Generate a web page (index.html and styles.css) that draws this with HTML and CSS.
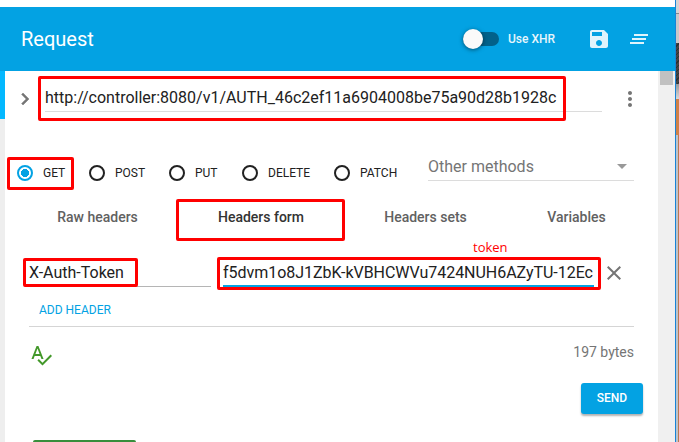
FILE: index.html
```html
<!DOCTYPE html>
<html lang="en">
<head>
<meta charset="utf-8">
<title>Request</title>
<link rel="stylesheet" href="styles.css">
</head>
<body>
<div class="screen">
  <div class="window">
    <header class="toolbar">
      <h1 class="title">Request</h1>
      <div class="toggle"><span class="knob"></span></div>
      <span class="toggle-label">Use XHR</span>
      <svg class="icon save" viewBox="0 0 24 24"><path d="M17 3H5c-1.11 0-2 .9-2 2v14c0 1.1.89 2 2 2h14c1.1 0 2-.9 2-2V7l-4-4zm-5 16c-1.66 0-3-1.34-3-3s1.34-3 3-3 3 1.34 3 3-1.34 3-3 3zm3-10H5V5h10v4z"/></svg>
      <svg class="icon clear" viewBox="0 0 24 24"><path d="M5 13h14v-2H5v2zm-2 4h14v-2H3v2zM7 7v2h14V7H7z"/></svg>
    </header>
    <div class="body">
      <div class="rail"></div>
      <main class="panel">
        <div class="url-row">
          <svg class="icon chevron" viewBox="0 0 24 24"><path d="M10 6L8.59 7.41 13.17 12l-4.58 4.59L10 18l6-6z"/></svg>
          <div class="url-field"><span class="t-url">http://controller:8080/v1/AUTH_46c2ef11a6904008be75a90d28b1928c</span><i class="mark mark-url"></i></div>
          <svg class="icon more" viewBox="0 0 24 24"><path d="M12 8c1.100 0 2-.9 2-2s-.9-2-2-2-2 .9-2 2 .9 2 2 2zm0 2c-1.100 0-2 .9-2 2s.9 2 2 2 2-.9 2-2-.9-2-2-2zm0 6c-1.100 0-2 .9-2 2s.9 2 2 2 2-.9 2-2-.9-2-2-2z"/></svg>
        </div>
        <div class="method-row">
          <div class="method get"><span class="radio on"></span><span>GET</span><i class="mark mark-get"></i></div>
          <div class="method post"><span class="radio"></span><span>POST</span></div>
          <div class="method put"><span class="radio"></span><span>PUT</span></div>
          <div class="method delete"><span class="radio"></span><span>DELETE</span></div>
          <div class="method patch"><span class="radio"></span><span>PATCH</span></div>
          <div class="select"><span class="t-other">Other methods</span><span class="caret"></span></div>
        </div>
        <nav class="tabs">
          <div class="tab"><span>Raw headers</span></div>
          <div class="tab active"><span>Headers form</span><i class="mark mark-tab"></i></div>
          <div class="tab"><span>Headers sets</span></div>
          <div class="tab"><span>Variables</span></div>
        </nav>
        <div class="header-row">
          <div class="name-field"><span class="t-name">X-Auth-Token</span><i class="mark mark-name"></i></div>
          <div class="value-field"><span class="t-value">f5dvm1o8J1ZbK-kVBHCWVu7424NUH6AZyTU-12Ec</span><i class="mark mark-value"></i><span class="note">token</span></div>
          <svg class="icon remove" viewBox="0 0 24 24"><path d="M19 6.410L17.590 5 12 10.590 6.410 5 5 6.410 10.590 12 5 17.590 6.410 19 12 13.410 17.590 19 19 17.590 13.410 12z"/></svg>
        </div>
        <div class="add-row"><span>ADD HEADER</span></div>
        <div class="info-row">
          <svg class="icon spell" viewBox="0 0 24 24"><path d="M12.450 16h2.090L9.430 3H7.570L2.460 16h2.090l1.120-3h5.640l1.140 3zm-6.020-5L8.500 5.480 10.570 11H6.430zm15.160.59l-8.090 8.090L9.830 16l-1.410 1.410 5.090 5.090L23 13l-1.410-1.410z"/></svg>
          <span class="bytes">197 bytes</span>
        </div>
        <div class="send-row"><button class="send">SEND</button></div>
        <div class="status"></div>
      </main>
      <div class="scrollbar"><div class="thumb"></div></div>
    </div>
  </div>
  <div class="desktop"><div class="d1"></div><div class="d2"></div><div class="d3"></div><div class="d4"></div><div class="d5"></div><div class="d6"></div></div>
</div>
</body>
</html>
```
FILE: styles.css
```css
* { box-sizing: border-box; }
body { margin: 0; width: 679px; height: 442px; overflow: hidden; background: #fff; font-family: Roboto, sans-serif; color: #212121; }
.screen { display: flex; height: 442px; white-space: nowrap; }
.window { width: 676px; padding-top: 7px; border-right: 1px solid #1883d7; }
.icon { width: 24px; height: 24px; flex: none; fill: #757575; }

.toolbar { height: 64px; background: #03a2e3; color: #fff; display: flex; align-items: center; padding-left: 21px; }
.title { margin: 0; width: 442px; font-size: 20px; font-weight: 400; line-height: 24px; }
.toggle { width: 36px; height: 14px; border-radius: 7px; background: #02618a; display: flex; align-items: center; }
.knob { width: 20px; height: 20px; border-radius: 50%; background: #fafafa; box-shadow: 0 1px 4px rgba(0,0,0,.5); flex: none; }
.toggle-label { margin-left: 9px; width: 79px; font-size: 12px; font-weight: 500; opacity: .9; }
.toolbar .icon { fill: #e0f4fc; }
.clear { margin-left: 16px; }

.body { display: flex; height: 371px; }
.rail { width: 5px; background: linear-gradient(#03b8ff 48px, #eee 48px); }
.panel { width: 653px; }
.scrollbar { width: 17px; background: #f0f0f0; padding: 0 2px; }
.thumb { height: 14px; background: #c1c1c1; }

.mark { position: absolute; border: 3px solid #ff0000; border-radius: 2px; }

.url-row { display: flex; height: 74px; padding: 16px 0 0 8px; }
.url-field { position: relative; margin-left: 8px; width: 557px; height: 25px; border-bottom: 1px solid #dcdcdc; font-size: 16px; line-height: 22px; }
.chevron { stroke: #757575; stroke-width: .5px; }
.more { margin-left: 16px; }
.mark-url { left: -7px; top: -11px; width: 528px; height: 45px; }

.method-row { display: flex; align-items: center; height: 48px; padding: 7px 0 0 12px; }
.method { position: relative; display: flex; align-items: center; gap: 10px; font-size: 12px; height: 40px; }
.get { width: 72px; }
.post { width: 80px; }
.put { width: 73px; }
.delete { width: 92px; }
.patch { width: 94px; }
.radio { width: 16px; height: 16px; border: 2px solid #212121; border-radius: 50%; }
.radio.on { border-color: #03a2e3; background: radial-gradient(circle, #03a2e3 3.800px, #fff 4.300px); }
.mark-get { left: -10px; top: 4px; width: 67px; height: 33px; }
.select { width: 206px; height: 28px; margin-bottom: 12px; border-bottom: 1px solid #dcdcdc; display: flex; align-items: center; justify-content: space-between; color: #757575; font-size: 16px; padding-right: 7px; }
.caret { border: 5px solid transparent; border-top-color: #999; border-bottom: 0; }

.tabs { display: flex; height: 48px; padding: 0 0 0 24px; font-size: 14px; font-weight: 500; color: #616161; }
.tab { position: relative; display: flex; align-items: center; justify-content: center; }
.tab:nth-child(1) { width: 137px; }
.tab:nth-child(2) { width: 190px; color: #333; }
.tab:nth-child(3) { width: 139px; }
.tab:nth-child(4) { width: 163px; }
.mark-tab { left: 10px; top: 6px; width: 169px; height: 42px; }

.header-row { display: flex; height: 51px; padding: 20px 0 0 24px; font-size: 16px; line-height: 23px; }
.name-field { position: relative; width: 182px; height: 26px; border-bottom: 1px solid #b5b5b5; }
.value-field { position: relative; width: 371px; height: 26px; margin-left: 12px; border-bottom: 2px solid #03a2e3; }
.t-value { letter-spacing: -.03px; }
.remove { margin-left: 8px; }
.mark-name { left: -6px; top: -3px; width: 115px; height: 29px; }
.mark-value { left: -6px; top: -4px; width: 384px; height: 33px; }
.note { position: absolute; left: 250px; top: -24px; color: #ff0000; font: 13px/20px "Open Sans", sans-serif; }

.add-row { height: 35px; margin: 0 24px; padding-left: 10px; border-bottom: 1px solid #d5d5d5; font-size: 12px; line-height: 36px; color: #03a2e3; }
.info-row { display: flex; justify-content: space-between; height: 56px; padding: 16px 24px 0; }
.spell { fill: #43982a; }
.bytes { font-size: 14px; line-height: 19px; color: #757575; }
.send-row { display: flex; justify-content: flex-end; height: 57px; padding-right: 15px; }
.send { width: 62px; height: 31px; border: 0; border-radius: 3px; background: #03a2e3; color: #fff; font: 500 12px Roboto, sans-serif; box-shadow: 0 2px 2px rgba(0,0,0,.3); padding: 0 0 2px; }
.status { margin-left: 28px; width: 103px; height: 10px; background: #388e3c; border-radius: 2px; }

.desktop { width: 3px; }
.d1 { height: 14px; background: #d4d4d4; border-bottom: 1px solid #888; }
.d2 { height: 29px; background: #c8c8c8; }
.d3 { height: 41px; background: repeating-linear-gradient(135deg, #444 0 2px, #303030 2px 3px); }
.d4 { height: 15px; background: linear-gradient(#999, #d8d8d8); }
.d5 { height: 36px; background: #cf8148; }
.d6 { height: 307px; background: linear-gradient(90deg, #bcc3cb 2px, #bd7a50 2px); }
.screen, .body { overflow: hidden; }
```
